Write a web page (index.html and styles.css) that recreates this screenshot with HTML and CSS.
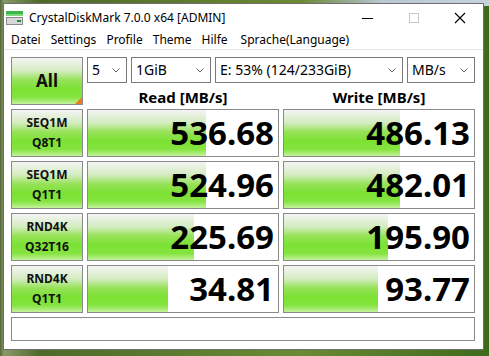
FILE: index.html
```html
<!DOCTYPE html>
<html>
<head>
<meta charset="utf-8">
<link rel="stylesheet" href="styles.css">
</head>
<body>
<div class="window">
  <div class="titlebar">
    <svg class="app-icon" width="17" height="14" viewBox="0 0 17 14">
      <rect x="0" y="0" width="17" height="3" fill="#3cb84a"/>
      <rect x="0" y="3" width="17" height="2" fill="#7ed67a"/>
      <rect x="0.5" y="6.5" width="16" height="7" fill="#d8d8d8" stroke="#8a8a8a"/>
      <rect x="11" y="9" width="4" height="2" fill="#2e8a3a"/>
    </svg>
    <span class="title">CrystalDiskMark 7.0.0 x64 [ADMIN]</span>
    <div class="controls">
      <span class="ctl"><svg width="12" height="12" viewBox="0 0 12 12"><line x1="0" y1="6.5" x2="11" y2="6.5" stroke="#000"/></svg></span>
      <span class="ctl"><svg width="12" height="12" viewBox="0 0 12 12"><rect x="1.5" y="1.5" width="9" height="9" fill="none" stroke="#c8c8c8"/></svg></span>
      <span class="ctl"><svg width="12" height="12" viewBox="0 0 12 12"><path d="M1 1 L11 11 M11 1 L1 11" stroke="#000" stroke-width="1.1"/></svg></span>
    </div>
  </div>
  <div class="menubar">
    <span>Datei</span><span>Settings</span><span>Profile</span><span>Theme</span><span>Hilfe</span><span>Sprache(Language)</span>
  </div>
  <div class="client">
    <div class="top">
      <div class="btn all">All</div>
      <div class="top-right">
        <div class="combos">
          <div class="combo w-count">5<svg class="chev" width="8" height="5" viewBox="0 0 8 5"><path d="M0.5 0.5 L4 4 L7.5 0.5" fill="none" stroke="#666"/></svg></div>
          <div class="combo w-size">1GiB<svg class="chev" width="8" height="5" viewBox="0 0 8 5"><path d="M0.5 0.5 L4 4 L7.5 0.5" fill="none" stroke="#666"/></svg></div>
          <div class="combo w-drive">E: 53% (124/233GiB)<svg class="chev" width="8" height="5" viewBox="0 0 8 5"><path d="M0.5 0.5 L4 4 L7.5 0.5" fill="none" stroke="#666"/></svg></div>
          <div class="combo w-unit">MB/s<svg class="chev" width="8" height="5" viewBox="0 0 8 5"><path d="M0.5 0.5 L4 4 L7.5 0.5" fill="none" stroke="#666"/></svg></div>
        </div>
        <div class="heads">
          <div class="head">Read [MB/s]</div>
          <div class="head">Write [MB/s]</div>
        </div>
      </div>
    </div>
    <div class="rows">
      <div class="btn label">SEQ1M<br>Q8T1</div>
      <div class="cell"><div class="bar" style="width:118px"></div><span class="val">536.68</span></div>
      <div class="cell"><div class="bar" style="width:116px"></div><span class="val">486.13</span></div>

      <div class="btn label">SEQ1M<br>Q1T1</div>
      <div class="cell"><div class="bar" style="width:118px"></div><span class="val">524.96</span></div>
      <div class="cell"><div class="bar" style="width:116px"></div><span class="val">482.01</span></div>

      <div class="btn label">RND4K<br>Q32T16</div>
      <div class="cell"><div class="bar" style="width:106px"></div><span class="val">225.69</span></div>
      <div class="cell"><div class="bar" style="width:104px"></div><span class="val">195.90</span></div>

      <div class="btn label">RND4K<br>Q1T1</div>
      <div class="cell"><div class="bar" style="width:80px"></div><span class="val">34.81</span></div>
      <div class="cell"><div class="bar" style="width:94px"></div><span class="val">93.77</span></div>
    </div>
    <div class="status"></div>
  </div>
</div>
</body>
</html>
```

FILE: styles.css
```css
body {
    margin: 0;
    padding: 3px 0 0 3px;
    height: 356px;
    box-sizing: border-box;
    overflow: hidden;
    font-family: "Noto Sans", "Open Sans", sans-serif;
    background:
        linear-gradient(to right, rgba(0,0,0,0) 0, rgba(0,0,0,0) 300px, #b9c7cf 380px, #c7d3da 100%) top / 100% 6px no-repeat,
        linear-gradient(to right, #55683a 0, #8a9868 4px, #4d6a2a 40px, #6a8a34 300px, #3f6a1c 100%);
}

.window {
    width: 481px;
    height: 347px;
    box-sizing: border-box;
    border: 1px solid #6f6f6f;
    background: #fff;
}

.titlebar {
    height: 27px;
    display: flex;
    align-items: center;
    padding-left: 2px;
}
.app-icon { margin-right: 6px; }
.title {
    font-size: 12px;
    color: #000;
}
.controls {
    margin-left: auto;
    display: flex;
}
.ctl {
    width: 46px;
    height: 27px;
    display: flex;
    align-items: center;
    justify-content: center;
}

.menubar {
    height: 18px;
    display: flex;
    padding-left: 2px;
    font-size: 12px;
    line-height: 18px;
    border-bottom: 1px solid #e6e6e6;
}
.menubar span { padding: 0 5px; }
.menubar span:last-child { padding-left: 8px; }

.client {
    padding: 7px 0 0 7px;
}

.top {
    display: flex;
    gap: 4px;
}
.top-right {
    display: flex;
    flex-direction: column;
}
.combos {
    display: flex;
    gap: 4px;
    height: 26px;
}
.combo {
    box-sizing: border-box;
    height: 26px;
    border: 1px solid #7a7a7a;
    background: #fff;
    font-size: 14px;
    line-height: 24px;
    padding-left: 4px;
    display: flex;
    align-items: center;
}
.combo .chev { margin-left: auto; margin-right: 6px; }
.w-count { width: 40px; }
.w-size { width: 80px; }
.w-drive { width: 188px; }
.w-unit { width: 68px; }

.heads {
    display: flex;
    gap: 4px;
    height: 22px;
}
.head {
    width: 192px;
    text-align: center;
    font-weight: bold;
    font-size: 15px;
    line-height: 28px;
}

.btn {
    box-sizing: border-box;
    border: 1px solid #8a8a8a;
    background: linear-gradient(to bottom, #f4f4f4 0%, #d4ecc0 28%, #96e258 48%, #7be232 68%, #86e442 86%, #c4f29c 100%);
    text-align: center;
    font-weight: bold;
    color: #111;
}
.all {
    width: 72px;
    height: 48px;
    font-size: 17px;
    line-height: 46px;
    position: relative;
}
.all::after {
    content: "";
    position: absolute;
    right: 0;
    bottom: 0;
    border-style: solid;
    border-width: 0 0 7px 7px;
    border-color: transparent transparent #f07b1c transparent;
}

.rows {
    margin-top: 4px;
    display: grid;
    grid-template-columns: 72px 192px 192px;
    grid-auto-rows: 48px;
    gap: 4px;
}
.label {
    font-size: 12px;
    line-height: 20px;
    padding-top: 3px;
}
.cell {
    box-sizing: border-box;
    border: 1px solid #8a8a8a;
    position: relative;
    display: flex;
    align-items: center;
    justify-content: flex-end;
    padding-right: 4px;
}
.bar {
    position: absolute;
    left: 0;
    top: 0;
    bottom: 0;
    background: linear-gradient(to bottom, #f4f4f4 0%, #d4ecc0 28%, #96e258 48%, #7be232 68%, #86e442 86%, #c4f29c 100%);
}
.val {
    position: relative;
    font-size: 33px;
    font-weight: bold;
    color: #000;
    line-height: 46px;
}

.status {
    margin-top: 4px;
    width: 464px;
    height: 24px;
    box-sizing: border-box;
    border: 1px solid #8a8a8a;
}
```
